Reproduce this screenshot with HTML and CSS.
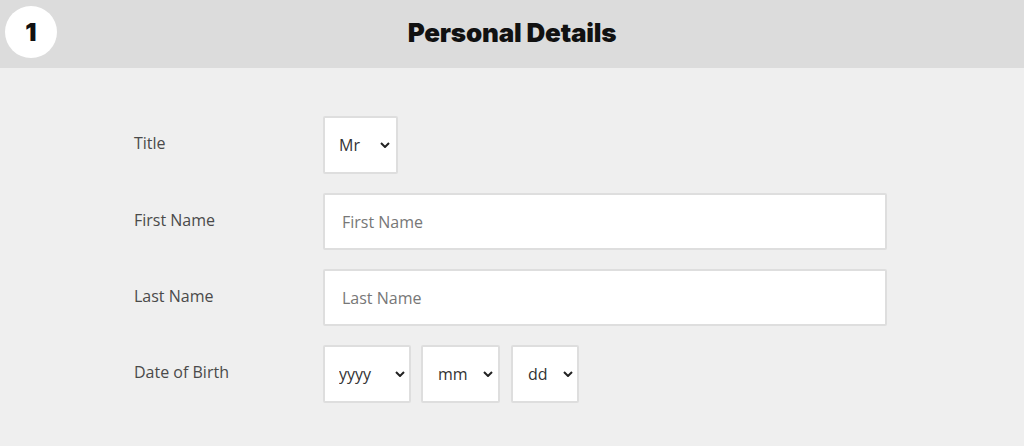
FILE: index.html
```html
<!DOCTYPE html>
<html lang="en">
<head>
<meta charset="utf-8">
<title>Personal Details</title>
<link rel="stylesheet" href="styles.css">
</head>
<body>
<header class="header">
  <div class="step">1</div>
  <h1 class="heading">Personal Details</h1>
</header>
<main class="form">
  <div class="row">
    <label class="label" for="title">Title</label>
    <span class="select-wrap w-title">
      <select id="title" class="select"><option>Mr</option></select>
      <svg class="chev" viewBox="0 0 10 6" width="10" height="6"><path d="M1 1 L5 5 L9 1" fill="none" stroke="#222" stroke-width="2"/></svg>
    </span>
  </div>
  <div class="row">
    <label class="label" for="first">First Name</label>
    <input id="first" class="input" type="text" placeholder="First Name">
  </div>
  <div class="row">
    <label class="label" for="last">Last Name</label>
    <input id="last" class="input" type="text" placeholder="Last Name">
  </div>
  <div class="row">
    <label class="label" for="year">Date of Birth</label>
    <div class="dob">
      <span class="select-wrap w-year">
        <select id="year" class="select"><option>yyyy</option></select>
        <svg class="chev" viewBox="0 0 10 6" width="10" height="6"><path d="M1 1 L5 5 L9 1" fill="none" stroke="#222" stroke-width="2"/></svg>
      </span>
      <span class="select-wrap w-month">
        <select class="select"><option>mm</option></select>
        <svg class="chev" viewBox="0 0 10 6" width="10" height="6"><path d="M1 1 L5 5 L9 1" fill="none" stroke="#222" stroke-width="2"/></svg>
      </span>
      <span class="select-wrap w-day">
        <select class="select"><option>dd</option></select>
        <svg class="chev" viewBox="0 0 10 6" width="10" height="6"><path d="M1 1 L5 5 L9 1" fill="none" stroke="#222" stroke-width="2"/></svg>
      </span>
    </div>
  </div>
</main>
</body>
</html>
```

FILE: styles.css
```css
* { box-sizing: border-box; }
html, body { margin: 0; padding: 0; }
body {
  background: #efefef;
  font-family: "Open Sans", "Noto Sans", sans-serif;
  color: #444;
  width: 1024px;
  height: 446px;
  overflow: hidden;
}
.header {
  position: relative;
  height: 68px;
  background: #dcdcdc;
  display: flex;
  align-items: center;
  justify-content: center;
}
.step {
  position: absolute;
  left: 5px;
  top: 6px;
  width: 52px;
  height: 52px;
  border-radius: 50%;
  background: #fff;
  display: flex;
  align-items: center;
  justify-content: center;
  font-family: "Inter", sans-serif;
  font-weight: 900;
  font-size: 25px;
  color: #111;
}
.heading {
  margin: 0;
  padding-bottom: 3px;
  font-family: "Inter", sans-serif;
  font-weight: 900;
  font-size: 26px;
  color: #111;
  letter-spacing: -0.2px;
}
.form {
  padding: 48px 0 0 134px;
  display: flex;
  flex-direction: column;
  gap: 19px;
}
.row {
  display: flex;
  align-items: center;
}
.label {
  width: 189px;
  font-size: 16px;
  color: #4a4a4a;
  padding-bottom: 4px;
}
.input {
  width: 564px;
  height: 57px;
  border: 2px solid #dedede;
  border-radius: 2px;
  background: #fff;
  padding: 0 17px;
  font-family: inherit;
  font-size: 16px;
  color: #333;
  outline: none;
}
.input::placeholder { color: #777; }
.select-wrap {
  position: relative;
  display: inline-block;
  height: 58px;
}
.select {
  -webkit-appearance: none;
  appearance: none;
  width: 100%;
  height: 100%;
  border: 2px solid #dedede;
  border-radius: 2px;
  background: #fff;
  padding: 0 0 0 14px;
  font-family: inherit;
  font-size: 16px;
  color: #333;
  outline: none;
}
.chev {
  position: absolute;
  top: 26px;
  pointer-events: none;
}
.w-title { width: 75px; }
.w-title .chev { right: 8px; }
.w-year { width: 88px; }
.w-year .chev { right: 6px; }
.w-month { width: 79px; }
.w-month .chev { right: 7px; }
.w-day { width: 68px; }
.w-day .chev { right: 6px; }
.w-month .select, .w-day .select { padding-left: 15px; }
.dob {
  display: flex;
  gap: 10px;
}
.w-day { margin-left: 1px; }
```
